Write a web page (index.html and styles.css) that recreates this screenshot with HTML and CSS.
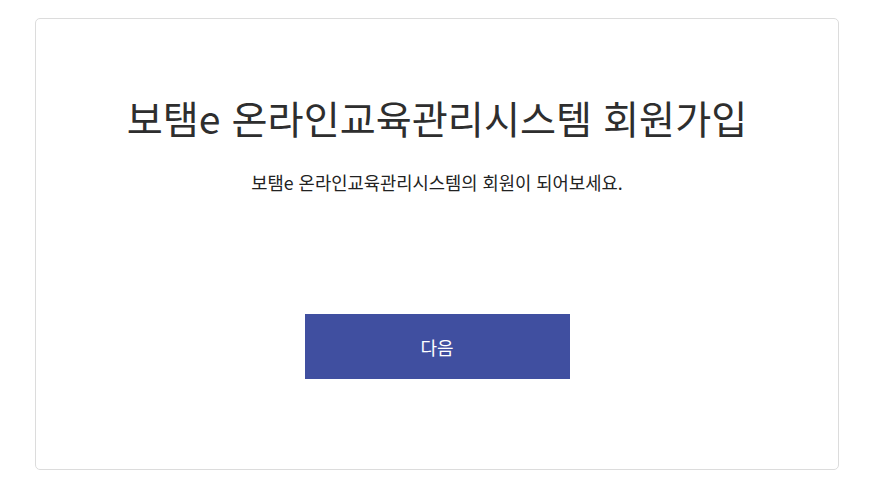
FILE: index.html
```html
<!DOCTYPE html>
<html lang="ko">
<head>
    <meta charset="UTF-8">
    <meta name="viewport" content="width=device-width, initial-scale=1.0">
    <title>회원가입</title>
    <link rel="stylesheet" href="styles.css">
</head>
<body>
    <div class="card">
        <h1 class="title">보탬e 온라인교육관리시스템 회원가입</h1>
        <p class="desc">보탬e 온라인교육관리시스템의 회원이 되어보세요.</p>
        <button class="next-btn">다음</button>
    </div>
</body>
</html>
```

FILE: styles.css
```css
body {
    margin: 0;
    padding: 18px 41px 0 35px;
    font-family: "Noto Sans CJK KR", "Noto Sans", sans-serif;
    background-color: #fff;
    color: #222;
}
.card {
    height: 452px;
    box-sizing: border-box;
    border: 1px solid #dcdcdc;
    border-radius: 5px;
    padding-top: 72px;
    display: flex;
    flex-direction: column;
    align-items: center;
}
.title {
    margin: 0;
    font-size: 39.2px;
    font-weight: 400;
    line-height: 52px;
    color: #2e2e2e;
}
.desc {
    margin: 26px 0 0;
    font-size: 17.7px;
    line-height: 26px;
    color: #222;
}
.next-btn {
    margin-top: 119px;
    width: 265px;
    height: 65px;
    border: none;
    background-color: #404fa0;
    color: #fff;
    font-family: inherit;
    font-size: 18px;
    cursor: pointer;
}
```
